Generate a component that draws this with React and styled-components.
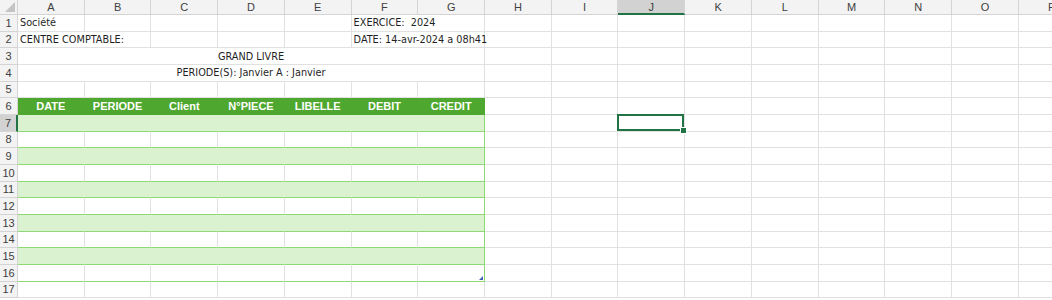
import React from 'react';
import styled, { createGlobalStyle, css } from 'styled-components';

const GlobalStyle = createGlobalStyle`
  html, body {
    margin: 0;
    padding: 0;
    background: #ffffff;
  }
  body {
    font-family: "Liberation Sans Narrow", "DejaVu Sans Condensed", Roboto, sans-serif;
  }
`;

const COLS = 'ABCDEFGHIJKLMNOP'.split('');
const TABLE_HEADS = ['DATE', 'PERIODE', 'Client', 'N°PIECE', 'LIBELLE', 'DEBIT', 'CREDIT'];

const grid = '#e1e1e1';
const headerGreen = '#4ea72e';
const bandGreen = '#daf2d0';
const lineGreen = '#8ed973';
const selectGreen = '#217346';

const Sheet = styled.div`
  display: grid;
  grid-template-columns: 18px repeat(16, 66.72px);
  grid-template-rows: 15px repeat(17, 16.67px);
  width: 1052px;
  height: 300px;
  overflow: hidden;
  font-size: 10.8px;
  color: #1f1f1f;
`;

const Corner = styled.div`
  position: relative;
  background: #f3f3f3;
  border-right: 1px solid #d4d4d4;
  border-bottom: 1px solid #d4d4d4;
  box-sizing: border-box;

  svg {
    position: absolute;
    right: 2px;
    bottom: 2px;
  }
`;

const ColHeader = styled.div`
  display: flex;
  align-items: center;
  justify-content: center;
  box-sizing: border-box;
  background: ${p => (p.$active ? '#d2d2d2' : '#f3f3f3')};
  border-right: 1px solid #d4d4d4;
  border-bottom: ${p => (p.$active ? `2px solid ${selectGreen}` : '1px solid #d4d4d4')};
  color: #404040;
  font-family: "Liberation Sans", Arial, sans-serif;
  font-size: 11px;
`;

const RowHeader = styled.div`
  display: flex;
  align-items: center;
  justify-content: center;
  box-sizing: border-box;
  background: ${p => (p.$active ? '#d2d2d2' : '#f3f3f3')};
  border-right: ${p => (p.$active ? `2px solid ${selectGreen}` : '1px solid #d4d4d4')};
  border-bottom: 1px solid #d4d4d4;
  color: #404040;
  font-family: "Liberation Sans", Arial, sans-serif;
  font-size: 11px;
`;

const variants = {
  plain: css`
    background: #ffffff;
    border-right: 1px solid ${grid};
    border-bottom: 1px solid ${grid};
  `,
  head: css`
    background: ${headerGreen};
    color: #ffffff;
    font-family: "Liberation Sans", Arial, sans-serif;
    font-weight: bold;
    font-size: 11px;
    justify-content: center;
    border-right: 1px solid ${headerGreen};
    border-bottom: 1px solid ${headerGreen};
  `,
  band: css`
    background: ${bandGreen};
    border-right: 1px solid ${bandGreen};
    border-bottom: 1px solid ${lineGreen};
  `,
  body: css`
    background: #ffffff;
    border-right: 1px solid ${grid};
    border-bottom: 1px solid ${lineGreen};
  `,
};

const Cell = styled.div`
  position: relative;
  display: flex;
  align-items: center;
  box-sizing: border-box;
  padding: 0 2px;
  white-space: pre;
  overflow: visible;
  z-index: ${p => (p.$hasText ? 1 : 'auto')};
  grid-column: span ${p => p.$span || 1};
  justify-content: ${p => (p.$center ? 'center' : 'flex-start')};
  ${p => variants[p.$kind || 'plain']}
  ${p => p.$edge && css`
    border-right-color: ${p.$kind === 'head' ? headerGreen : lineGreen};
  `}
  ${p => p.$resize && css`
    &::after {
      content: '';
      position: absolute;
      right: 1px;
      bottom: 1px;
      width: 0;
      height: 0;
      border-left: 4px solid transparent;
      border-bottom: 4px solid #3c62b8;
    }
  `}
  ${p => p.$selected && css`
    &::before {
      content: '';
      position: absolute;
      left: -1px;
      top: -1px;
      right: 0;
      bottom: 0;
      border: 2px solid ${selectGreen};
      z-index: 2;
    }
    &::after {
      content: '';
      position: absolute;
      right: -3px;
      bottom: -3px;
      width: 5px;
      height: 5px;
      background: ${selectGreen};
      border: 1px solid #ffffff;
      z-index: 3;
    }
  `}
`;

const ROW_COUNT = 17;

// describes the cells of a row as [{ span, text, kind, ... }]
function buildRow(r) {
  const cells = [];
  const fill = (from, to, extra = {}) => {
    for (let i = from; i <= to; i += 1) cells.push({ col: i, ...extra });
  };

  if (r === 1) {
    cells.push({ col: 0, text: 'Société' });
    fill(1, 4);
    cells.push({ col: 5, span: 2, text: 'EXERCICE:  2024' });
    fill(7, 15);
  } else if (r === 2) {
    cells.push({ col: 0, span: 2, text: 'CENTRE COMPTABLE:' });
    fill(2, 4);
    cells.push({ col: 5, span: 2, text: 'DATE: 14-avr-2024 a 08h41' });
    fill(7, 15);
  } else if (r === 3) {
    cells.push({ col: 0, span: 7, center: true, text: 'GRAND LIVRE' });
    fill(7, 15);
  } else if (r === 4) {
    cells.push({ col: 0, span: 7, center: true, text: 'PERIODE(S): Janvier A : Janvier' });
    fill(7, 15);
  } else if (r === 6) {
    TABLE_HEADS.forEach((text, i) => {
      cells.push({ col: i, kind: 'head', text, edge: i === 6 });
    });
    fill(7, 15);
  } else if (r >= 7 && r <= 16) {
    const kind = r % 2 === 1 ? 'band' : 'body';
    for (let i = 0; i < 7; i += 1) {
      cells.push({ col: i, kind, edge: i === 6, resize: r === 16 && i === 6 });
    }
    fill(7, 15, { selectedAt: r === 7 ? 9 : -1 });
  } else {
    fill(0, 15);
  }
  return cells;
}

const CornerMark = () => (
  <svg width="10" height="10" viewBox="0 0 10 10">
    <polygon points="10,0 10,10 0,10" fill="#c4c4c4" />
  </svg>
);

export default function App() {
  const rows = [];
  for (let r = 1; r <= ROW_COUNT; r += 1) rows.push(r);

  return (
    <>
      <GlobalStyle />
      <Sheet>
        <Corner><CornerMark /></Corner>
        {COLS.map(c => (
          <ColHeader key={c} $active={c === 'J'}>{c}</ColHeader>
        ))}
        {rows.map(r => (
          <React.Fragment key={r}>
            <RowHeader $active={r === 7}>{r}</RowHeader>
            {buildRow(r).map(cell => (
              <Cell
                key={`${r}-${cell.col}`}
                $span={cell.span}
                $kind={cell.kind}
                $center={cell.center || cell.kind === 'head'}
                $edge={cell.edge}
                $resize={cell.resize}
                $hasText={!!cell.text}
                $selected={cell.selectedAt === cell.col}
              >
                {cell.text}
              </Cell>
            ))}
          </React.Fragment>
        ))}
      </Sheet>
    </>
  );
}
